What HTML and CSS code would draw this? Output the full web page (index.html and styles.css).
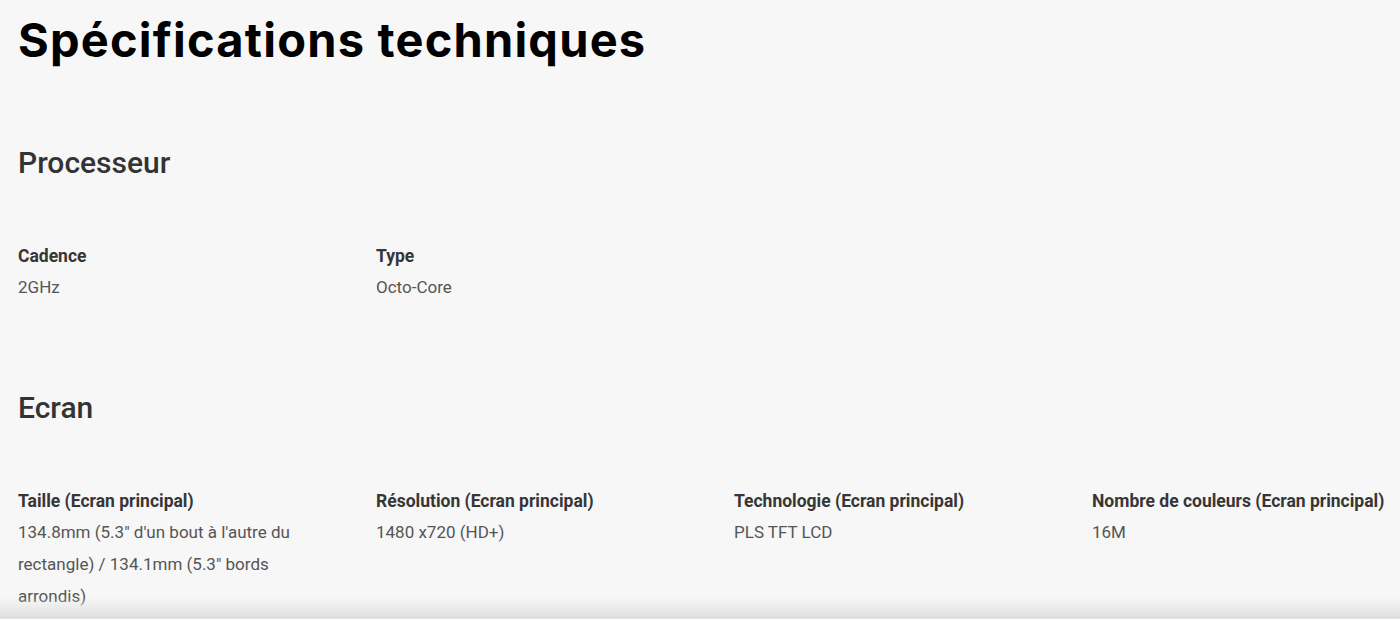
FILE: index.html
```html
<!DOCTYPE html>
<html lang="fr">
<head>
<meta charset="utf-8">
<title>Spécifications techniques</title>
<link rel="stylesheet" href="styles.css">
</head>
<body>
<main class="page">
  <h1 class="title">Spécifications techniques</h1>

  <section class="spec-section">
    <h2 class="spec-heading">Processeur</h2>
    <div class="spec-grid">
      <div class="spec-item">
        <div class="spec-label">Cadence</div>
        <div class="spec-value">2GHz</div>
      </div>
      <div class="spec-item">
        <div class="spec-label">Type</div>
        <div class="spec-value">Octo-Core</div>
      </div>
    </div>
  </section>

  <section class="spec-section">
    <h2 class="spec-heading">Ecran</h2>
    <div class="spec-grid">
      <div class="spec-item">
        <div class="spec-label">Taille (Ecran principal)</div>
        <div class="spec-value">134.8mm (5.3" d'un bout à l'autre du rectangle) / 134.1mm (5.3" bords arrondis)</div>
      </div>
      <div class="spec-item">
        <div class="spec-label">Résolution (Ecran principal)</div>
        <div class="spec-value">1480 x720 (HD+)</div>
      </div>
      <div class="spec-item">
        <div class="spec-label">Technologie (Ecran principal)</div>
        <div class="spec-value">PLS TFT LCD</div>
      </div>
      <div class="spec-item">
        <div class="spec-label">Nombre de couleurs (Ecran principal)</div>
        <div class="spec-value">16M</div>
      </div>
    </div>
  </section>
</main>
<div class="bottom-shade"></div>
</body>
</html>
```

FILE: styles.css
```css
html, body {
  margin: 0;
  padding: 0;
  background: #f7f7f7;
}

body {
  font-family: Roboto, "Liberation Sans", sans-serif;
  color: #363636;
}

.page {
  padding: 12px 0 0 18px;
}

.title {
  margin: 0;
  font-family: Inter, "Liberation Sans", sans-serif;
  font-weight: 700;
  font-size: 47px;
  line-height: 56px;
  color: #000;
  letter-spacing: 1.2px;
}

.spec-section {
  margin-top: 75px;
}

.spec-section + .spec-section {
  margin-top: 85px;
}

.spec-heading {
  margin: 0 0 58px 0;
  font-size: 30px;
  line-height: 40px;
  font-weight: 500;
  color: #333;
}

.spec-grid {
  display: grid;
  grid-template-columns: repeat(4, 358px);
}

.spec-item {
  padding-right: 48px;
}

.spec-label {
  font-size: 17.5px;
  font-weight: 700;
  line-height: 30px;
  color: #363636;
}

.spec-value {
  font-size: 17px;
  font-weight: 400;
  line-height: 32px;
  color: #555;
}

.bottom-shade {
  position: fixed;
  left: 0;
  right: 0;
  bottom: 0;
  height: 22px;
  background: linear-gradient(to bottom, rgba(247,247,247,0) 0%, #e4e4e4 80%, #d9d9d9 95%, #efefef 100%);
  pointer-events: none;
}
```
